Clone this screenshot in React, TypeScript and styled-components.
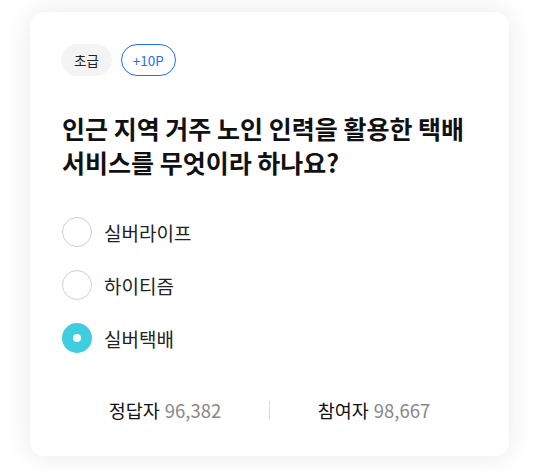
import styled, { createGlobalStyle } from "styled-components";

const GlobalStyle = createGlobalStyle`
  html, body {
    margin: 0;
    padding: 0;
    background: #ffffff;
  }
  body {
    font-family: "Noto Sans CJK KR", "Noto Sans", sans-serif;
  }
`;

const StyledPage = styled.div`
  padding: 12px 31px 15px 30px;
  height: 471px;
  box-sizing: border-box;
`;

const StyledCard = styled.div`
  display: flex;
  flex-direction: column;
  height: 444px;
  box-sizing: border-box;
  padding: 32px 31px 0 31px;
  background: #fff;
  border-radius: 14px;
  box-shadow: 0 0 28px rgba(0, 0, 0, 0.09);
`;

const StyledChips = styled.div`
  display: flex;
  gap: 9px;
`;

const StyledChip = styled.span<{ $outline?: boolean }>`
  display: inline-flex;
  align-items: center;
  justify-content: center;
  height: 32px;
  box-sizing: border-box;
  padding: 0 ${(p) => (p.$outline ? "11px" : "12px")};
  border-radius: 16px;
  font-size: 13.5px;
  background: ${(p) => (p.$outline ? "#fff" : "#f4f4f4")};
  color: ${(p) => (p.$outline ? "#1a73f0" : "#222")};
  border: 1px solid ${(p) => (p.$outline ? "#1a73f0" : "#f4f4f4")};
`;

const StyledTitle = styled.h2`
  margin: 35px 0 0 1px;
  font-size: 25px;
  font-weight: 700;
  line-height: 34px;
  color: #111;
`;

const StyledOptions = styled.div`
  display: flex;
  flex-direction: column;
  gap: 23px;
  margin-top: 38px;
`;

const StyledOption = styled.label`
  display: flex;
  align-items: center;
  gap: 12px;
  font-size: 19px;
  color: #222;
  height: 30px;
  margin-left: 1px;
`;

const StyledRadio = styled.span<{ $checked?: boolean }>`
  display: flex;
  align-items: center;
  justify-content: center;
  width: 30px;
  height: 30px;
  box-sizing: border-box;
  border-radius: 50%;
  border: ${(p) => (p.$checked ? "none" : "1.5px solid #cfcfcf")};
  background: ${(p) => (p.$checked ? "#41cde0" : "#fff")};

  &::after {
    content: "";
    display: ${(p) => (p.$checked ? "block" : "none")};
    width: 8px;
    height: 8px;
    border-radius: 50%;
    background: #fff;
  }
`;

const StyledStats = styled.div`
  display: flex;
  align-items: center;
  justify-content: center;
  margin-top: 44px;
`;

const StyledStat = styled.div`
  width: 238px;
  text-align: center;
  font-size: 18.5px;
  color: #111;
`;

const StyledNumber = styled.span`
  color: #888;
  margin-left: 5px;
`;

const StyledDivider = styled.div`
  width: 1px;
  height: 18px;
  background: #ddd;
`;

const options = [
  { label: "실버라이프", checked: false },
  { label: "하이티즘", checked: false },
  { label: "실버택배", checked: true },
];

export default function App() {
  return (
    <>
      <GlobalStyle />
      <StyledPage>
        <StyledCard>
          <StyledChips>
            <StyledChip>초급</StyledChip>
            <StyledChip $outline>+10P</StyledChip>
          </StyledChips>

          <StyledTitle>
            인근 지역 거주 노인 인력을 활용한 택배
            <br />
            서비스를 무엇이라 하나요?
          </StyledTitle>

          <StyledOptions>
            {options.map((o) => (
              <StyledOption key={o.label}>
                <StyledRadio $checked={o.checked} />
                {o.label}
              </StyledOption>
            ))}
          </StyledOptions>

          <StyledStats>
            <StyledStat>
              정답자<StyledNumber>96,382</StyledNumber>
            </StyledStat>
            <StyledDivider />
            <StyledStat>
              참여자<StyledNumber>98,667</StyledNumber>
            </StyledStat>
          </StyledStats>
        </StyledCard>
      </StyledPage>
    </>
  );
}
